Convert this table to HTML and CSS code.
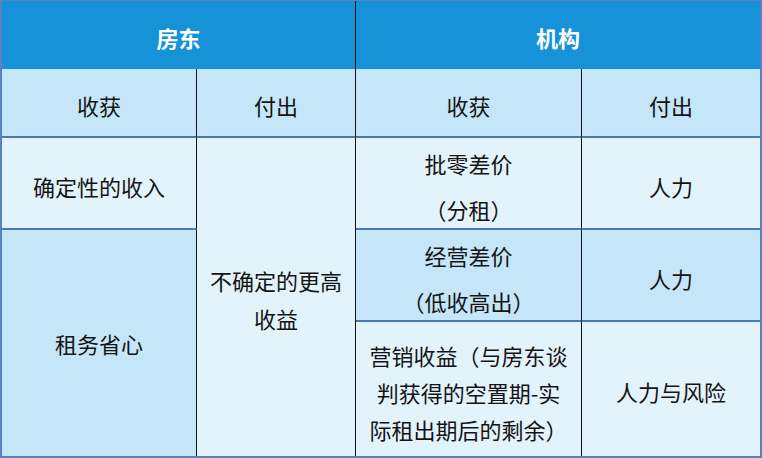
FILE: index.html
```html
<!DOCTYPE html>
<html lang="zh-CN">
<head>
<meta charset="utf-8">
<title>房东与机构</title>
<link rel="stylesheet" href="styles.css">
</head>
<body>
<div class="table">
  <div class="cell head span-a">房东</div>
  <div class="cell head span-b last">机构</div>

  <div class="cell sub line">收获</div>
  <div class="cell sub line">付出</div>
  <div class="cell sub line">收获</div>
  <div class="cell sub line last">付出</div>

  <div class="cell light line c1">确定性的收入</div>
  <div class="cell light tall c2"><span class="wrap">不确定的更高收益</span></div>
  <div class="cell light line two c3 r3">批零差价<br>（分租）</div>
  <div class="cell light line c4 r3 last">人力</div>

  <div class="cell mid c1 big">租务省心</div>
  <div class="cell mid line two c3 r4">经营差价<br>（低收高出）</div>
  <div class="cell mid line c4 r4 last">人力</div>

  <div class="cell light c3 r5 multi">营销收益（与房东谈<br>判获得的空置期-实<br>际租出期后的剩余）</div>
  <div class="cell light c4 r5 last low">人力与风险</div>
</div>
</body>
</html>
```
FILE: styles.css
```css
html, body {
  margin: 0;
  padding: 0;
  background: #ffffff;
}
body {
  width: 762px;
  height: 458px;
  overflow: hidden;
  font-family: "Noto Sans CJK SC", "Noto Sans", sans-serif;
  font-size: 22px;
  color: #141414;
}
.table {
  box-sizing: border-box;
  width: 762px;
  height: 458px;
  border-top: 1px solid #5a80c2;
  border-left: 2px solid #5a80c2;
  border-right: 2px solid #5a80c2;
  border-bottom: 2px solid #5a80c2;
  display: grid;
  grid-template-columns: 195px 159px 226px 178px;
  grid-template-rows: 68px 69px 92px 92px 134px;
}
.cell {
  box-sizing: border-box;
  display: flex;
  align-items: center;
  justify-content: center;
  text-align: center;
  border-right: 1px solid #111111;
  line-height: 38px;
  padding-top: 5px;
}
.cell.last {
  border-right: none;
}
.line {
  border-bottom: 2px solid #4b78ad;
}
.head {
  background: #1592d8;
  color: #ffffff;
  font-weight: bold;
  padding-top: 4px;
}
.span-a {
  grid-column: 1 / 3;
}
.span-b {
  grid-column: 3 / 5;
}
.sub {
  background: #c4e6f8;
  padding-top: 4px;
}
.light {
  background: #e3f3fc;
}
.mid {
  background: #c4e6f8;
}
.c1 { grid-column: 1; }
.c2 { grid-column: 2; }
.c3 { grid-column: 3; }
.c4 { grid-column: 4; }
.r3 { grid-row: 3; }
.r4 { grid-row: 4; }
.r5 { grid-row: 5; }
.tall {
  grid-row: 3 / 6;
  padding-left: 12px;
  padding-right: 12px;
  padding-top: 4px;
}
.big {
  grid-row: 4 / 6;
  padding-top: 0;
}
.two {
  line-height: 46px;
  padding-top: 6px;
}
.multi {
  line-height: 37px;
  padding-top: 6px;
}
.low {
  padding-top: 4px;
}
.wrap {
  display: block;
}
```
